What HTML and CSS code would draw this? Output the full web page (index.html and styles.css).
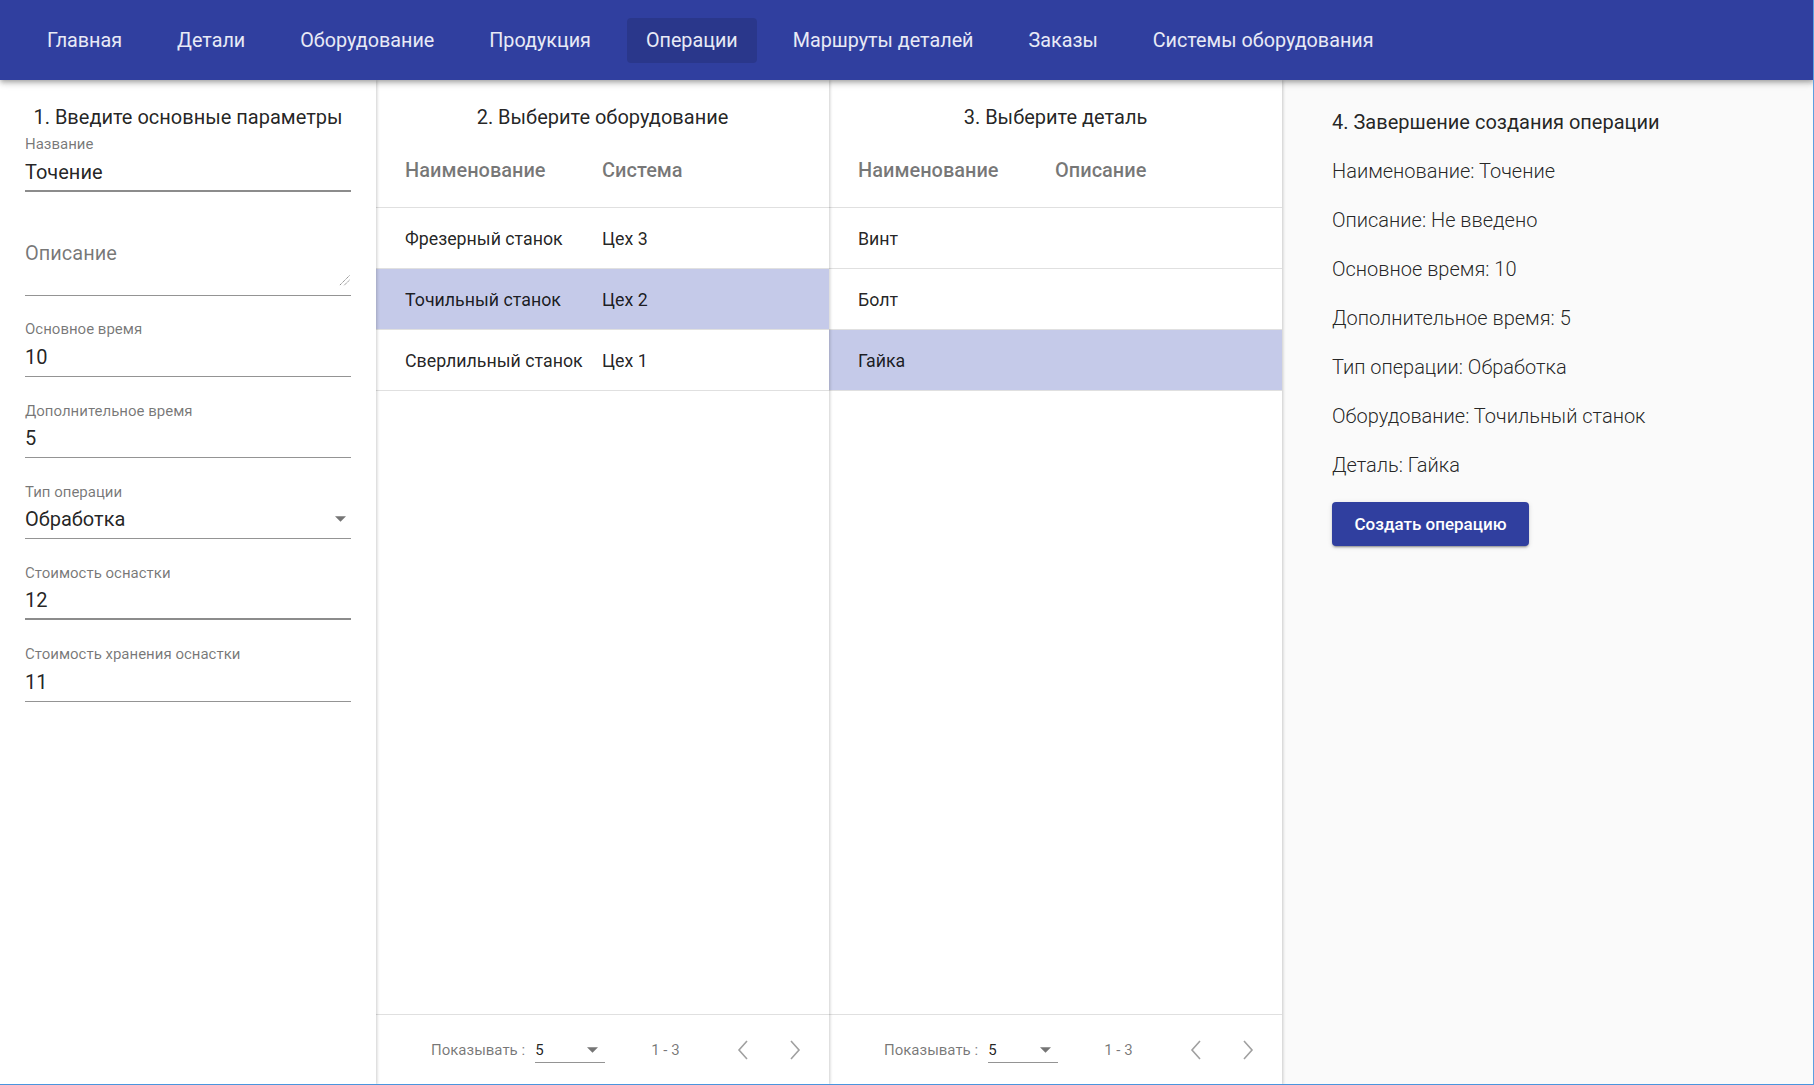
FILE: index.html
```html
<!DOCTYPE html>
<html lang="ru">
<head>
<meta charset="utf-8">
<title>Операции</title>
<link rel="stylesheet" href="styles.css">
</head>
<body>
<header class="topbar">
  <nav class="nav">
    <a class="nav-item">Главная</a>
    <a class="nav-item">Детали</a>
    <a class="nav-item">Оборудование</a>
    <a class="nav-item">Продукция</a>
    <a class="nav-item active">Операции</a>
    <a class="nav-item">Маршруты деталей</a>
    <a class="nav-item">Заказы</a>
    <a class="nav-item">Системы оборудования</a>
  </nav>
</header>
<main class="layout">
  <section class="form-panel">
    <h2 class="panel-title">1. Введите основные параметры</h2>
    <div class="field strong first">
      <div class="field-label">Название</div>
      <div class="field-value">Точение</div>
    </div>
    <div class="field textarea">
      <div class="field-label"></div>
      <div class="field-value placeholder">Описание</div>
      <svg class="resize" width="11" height="11" viewBox="0 0 11 11"><path d="M10.5 0.5 L0.5 10.5 M10.5 5 L5 10.5" stroke="#8a8a8a" stroke-width="1" stroke-dasharray="1.4 0.6" fill="none"/></svg>
    </div>
    <div class="field">
      <div class="field-label">Основное время</div>
      <div class="field-value">10</div>
    </div>
    <div class="field">
      <div class="field-label">Дополнительное время</div>
      <div class="field-value">5</div>
    </div>
    <div class="field">
      <div class="field-label">Тип операции</div>
      <div class="field-value select">
        <span>Обработка</span>
        <svg class="arrow" width="11" height="6" viewBox="0 0 10 5"><path d="M0 0 L5 5 L10 0 Z" fill="rgba(0,0,0,0.54)"/></svg>
      </div>
    </div>
    <div class="field strong">
      <div class="field-label">Стоимость оснастки</div>
      <div class="field-value">12</div>
    </div>
    <div class="field">
      <div class="field-label">Стоимость хранения оснастки</div>
      <div class="field-value">11</div>
    </div>
  </section>

  <section class="table-panel equipment">
    <h2 class="panel-title">2. Выберите оборудование</h2>
    <div class="table">
      <div class="row head"><div class="cell c1">Наименование</div><div class="cell c2">Система</div></div>
      <div class="row"><div class="cell c1">Фрезерный станок</div><div class="cell c2">Цех 3</div></div>
      <div class="row selected"><div class="cell c1">Точильный станок</div><div class="cell c2">Цех 2</div></div>
      <div class="row"><div class="cell c1">Сверлильный станок</div><div class="cell c2">Цех 1</div></div>
    </div>
    <div class="paginator">
      <span class="pg-label">Показывать :</span>
      <div class="pg-select">
        <span>5</span>
        <svg width="11" height="6" viewBox="0 0 10 5"><path d="M0 0 L5 5 L10 0 Z" fill="rgba(0,0,0,0.54)"/></svg>
      </div>
      <span class="pg-range">1 - 3</span>
      <span class="pg-btn prev"><svg width="12" height="20" viewBox="0 0 12 20"><polyline points="10,1 2,10 10,19" fill="none" stroke="#a0a0a0" stroke-width="1.6"/></svg></span>
      <span class="pg-btn next"><svg width="12" height="20" viewBox="0 0 12 20"><polyline points="2,1 10,10 2,19" fill="none" stroke="#a0a0a0" stroke-width="1.6"/></svg></span>
    </div>
  </section>

  <section class="table-panel details">
    <h2 class="panel-title">3. Выберите деталь</h2>
    <div class="table">
      <div class="row head"><div class="cell c1">Наименование</div><div class="cell c2">Описание</div></div>
      <div class="row"><div class="cell c1">Винт</div><div class="cell c2"></div></div>
      <div class="row"><div class="cell c1">Болт</div><div class="cell c2"></div></div>
      <div class="row selected"><div class="cell c1">Гайка</div><div class="cell c2"></div></div>
    </div>
    <div class="paginator">
      <span class="pg-label">Показывать :</span>
      <div class="pg-select">
        <span>5</span>
        <svg width="11" height="6" viewBox="0 0 10 5"><path d="M0 0 L5 5 L10 0 Z" fill="rgba(0,0,0,0.54)"/></svg>
      </div>
      <span class="pg-range">1 - 3</span>
      <span class="pg-btn prev"><svg width="12" height="20" viewBox="0 0 12 20"><polyline points="10,1 2,10 10,19" fill="none" stroke="#a0a0a0" stroke-width="1.6"/></svg></span>
      <span class="pg-btn next"><svg width="12" height="20" viewBox="0 0 12 20"><polyline points="2,1 10,10 2,19" fill="none" stroke="#a0a0a0" stroke-width="1.6"/></svg></span>
    </div>
  </section>

  <section class="summary">
    <h2 class="summary-title">4. Завершение создания операции</h2>
    <p class="summary-item">Наименование: Точение</p>
    <p class="summary-item">Описание: Не введено</p>
    <p class="summary-item">Основное время: 10</p>
    <p class="summary-item">Дополнительное время: 5</p>
    <p class="summary-item">Тип операции: Обработка</p>
    <p class="summary-item">Оборудование: Точильный станок</p>
    <p class="summary-item">Деталь: Гайка</p>
    <button class="create-btn">Создать операцию</button>
  </section>
</main>
</body>
</html>
```

FILE: styles.css
```css
* { box-sizing: border-box; }
html, body { margin: 0; height: 100%; }
body {
  font-family: Roboto, "Noto Sans", "Liberation Sans", sans-serif;
  background: #fafafa;
  color: rgba(0, 0, 0, 0.87);
  overflow: hidden;
}
/* thin window frame seen along the right and bottom edges */
body::after {
  content: "";
  position: fixed;
  top: 0;
  left: 0;
  right: 0;
  bottom: 0;
  border-right: 1px solid #5b9fe0;
  border-bottom: 1px solid #4a95de;
  pointer-events: none;
  z-index: 10;
}

/* top bar */
.topbar {
  height: 80px;
  background: #303f9f;
  display: flex;
  align-items: center;
  position: relative;
  z-index: 5;
  box-shadow: 0 2px 4px -1px rgba(0,0,0,.2), 0 4px 5px 0 rgba(0,0,0,.14), 0 1px 10px 0 rgba(0,0,0,.12);
}
.nav {
  display: flex;
  align-items: center;
  gap: 17px;
  padding-left: 28px;
}
.nav-item {
  height: 45px;
  padding: 0 19px;
  display: flex;
  align-items: center;
  font-size: 19.75px;
  color: #e8eaf6;
  border-radius: 4px;
  white-space: nowrap;
}
.nav-item.active { background: rgba(0, 0, 0, 0.12); }

/* layout */
.layout {
  display: flex;
  height: calc(100vh - 80px);
}
.panel-title {
  margin: 0;
  padding-top: 21px;
  font-size: 20px;
  font-weight: 400;
  line-height: 32px;
  text-align: center;
  color: rgba(0, 0, 0, 0.87);
  white-space: nowrap;
}

/* form panel */
.form-panel {
  width: 376px;
  flex: none;
  background: #fff;
  padding: 0 25px;
  position: relative;
  z-index: 4;
  box-shadow: 1px 0 3px rgba(0,0,0,.2);
}
.field {
  position: relative;
  margin-top: 25.7px;
  padding-bottom: 7px;
  border-bottom: 1px solid rgba(0, 0, 0, 0.42);
}
.field.first { margin-top: 2.5px; }
.field.first .field-value { margin-top: 8.7px; }
.field.strong { border-bottom: 2px solid rgba(0, 0, 0, 0.45); padding-bottom: 6px; }
.field-label {
  height: 16px;
  font-size: 15px;
  line-height: 16px;
  color: rgba(0, 0, 0, 0.54);
  white-space: nowrap;
}
.field-value {
  margin-top: 7.5px;
  font-size: 20px;
  line-height: 24px;
  height: 24px;
  color: rgba(0, 0, 0, 0.87);
}
.field.textarea .field-value { height: 46.3px; }
.field-value.placeholder { color: rgba(0, 0, 0, 0.54); }
.resize {
  position: absolute;
  right: 1px;
  bottom: 9px;
}
.field-value.select {
  display: flex;
  align-items: center;
  justify-content: space-between;
  padding-right: 5px;
}

/* tables */
.table-panel {
  width: 453px;
  flex: none;
  background: #fff;
  display: flex;
  flex-direction: column;
  position: relative;
  box-shadow: 1px 0 3px rgba(0,0,0,.2);
}
.table-panel.equipment { z-index: 3; }
.table-panel.details { z-index: 2; }
.row {
  display: flex;
  align-items: center;
  height: 61px;
  border-bottom: 1px solid #e0e0e0;
  font-size: 17.8px;
  color: rgba(0, 0, 0, 0.87);
}
.row.head {
  height: 75px;
  font-size: 20px;
  font-weight: 500;
  color: rgba(0, 0, 0, 0.54);
}
.row.selected { background: #c5cae9; }
.cell.c1 { width: 226px; flex: none; padding-left: 29px; white-space: nowrap; }
.cell.c2 { flex: 1; white-space: nowrap; }

/* paginator */
.paginator {
  margin-top: auto;
  height: 71px;
  border-top: 1px solid #e0e0e0;
  display: flex;
  align-items: center;
  padding-left: 55px;
  font-size: 15px;
  color: rgba(0, 0, 0, 0.54);
}
.pg-select {
  width: 70px;
  margin-left: 10px;
  height: 25px;
  margin-top: 1px;
  border-bottom: 1px solid rgba(0, 0, 0, 0.42);
  display: flex;
  align-items: center;
  justify-content: space-between;
  padding-right: 7px;
  color: rgba(0, 0, 0, 0.87);
}
.pg-range { margin-left: 46px; }
.pg-btn {
  width: 40px;
  height: 40px;
  display: flex;
  align-items: center;
  justify-content: center;
}
.pg-btn.prev { margin-left: 43px; }
.pg-btn.next { margin-left: 12px; }

/* summary */
.summary {
  flex: 1;
  background: #fafafa;
  padding: 18px 0 0 50px;
}
.summary-title {
  margin: 0;
  font-size: 20px;
  font-weight: 400;
  line-height: 49px;
  color: rgba(0, 0, 0, 0.87);
}
.summary-item {
  margin: 0;
  font-size: 20px;
  font-weight: 300;
  line-height: 49px;
  color: rgba(0, 0, 0, 0.87);
}
.create-btn {
  margin-top: 12px;
  width: 197px;
  height: 44px;
  border: none;
  border-radius: 4px;
  background: #303f9f;
  color: #fff;
  font-family: Roboto, "Noto Sans", sans-serif;
  font-size: 17px;
  font-weight: 500;
  box-shadow: 0 3px 1px -2px rgba(0,0,0,.2), 0 2px 2px 0 rgba(0,0,0,.14), 0 1px 5px 0 rgba(0,0,0,.12);
}
```
